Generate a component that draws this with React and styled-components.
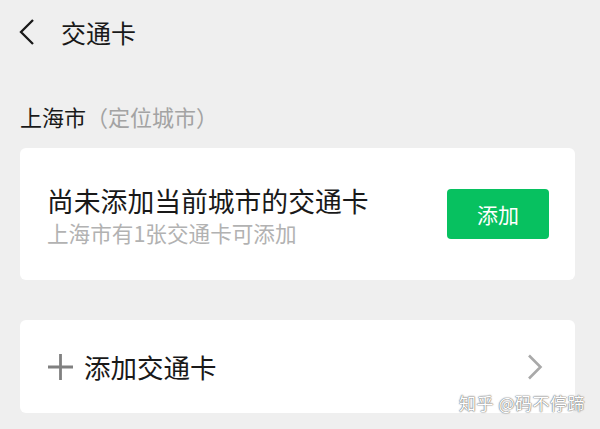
import styled, { createGlobalStyle } from 'styled-components';

const Global = createGlobalStyle`
  html, body {
    margin: 0;
    padding: 0;
    background: #efefef;
  }
  body {
    font-family: "Noto Sans CJK SC", "Noto Sans", sans-serif;
  }
`;

const Page = styled.div`
  position: relative;
  width: 600px;
  height: 429px;
  overflow: hidden;
  background: #efefef;
`;

const Header = styled.div`
  display: flex;
  align-items: center;
  height: 64px;
  padding-left: 19px;
  gap: 26px;
`;

const HeaderTitle = styled.div`
  font-size: 25px;
  color: #191919;
  line-height: 1;
`;

const SectionLabel = styled.div`
  margin: 37px 0 0 20px;
  font-size: 22px;
  line-height: 30px;
  color: #191919;

  span {
    color: #a3a3a3;
  }
`;

const Card = styled.div`
  box-sizing: border-box;
  margin: ${(p) => p.$top}px 25px 0 20px;
  height: ${(p) => p.$height}px;
  background: #fff;
  border-radius: 6px;
  display: flex;
  align-items: center;
  padding: 0 26px 0 27px;
`;

const TextBlock = styled.div`
  flex: 1;
  padding-top: 4px;
`;

const CardTitle = styled.div`
  font-size: 26.8px;
  line-height: 34px;
  color: #191919;
`;

const CardSub = styled.div`
  font-size: 21.6px;
  line-height: 30px;
  color: #b2b2b2;
`;

const AddButton = styled.button`
  width: 102px;
  height: 50px;
  border: 0;
  border-radius: 4px;
  background: #07c160;
  color: #fff;
  font-family: inherit;
  font-size: 21px;
  padding: 0;
`;

const RowLabel = styled.div`
  flex: 1;
  display: flex;
  align-items: center;
  gap: 10px;
  font-size: 26.5px;
  color: #191919;
`;

const Chevron = styled.svg`
  margin-right: 6px;
`;

const Watermark = styled.div`
  position: absolute;
  right: 15px;
  bottom: 14px;
  font-size: 17px;
  color: #fff;
  letter-spacing: 0.5px;
  text-shadow: 0 0 1px #777, 0 0 1px #777, 0 0 2px #999;
`;

const BackIcon = () => (
  <svg width="16" height="28" viewBox="0 0 16 28">
    <path d="M14 2 L2 14 L14 26" fill="none" stroke="#191919" strokeWidth="2.3" />
  </svg>
);

const PlusIcon = () => (
  <svg width="27" height="28" viewBox="0 0 27 28">
    <path d="M13.5 1 V27 M1 14 H26" stroke="#808080" strokeWidth="2.8" />
  </svg>
);

const ChevronIcon = () => (
  <Chevron width="16" height="26" viewBox="0 0 16 26">
    <path d="M2 1.5 L13.5 13 L2 24.5" fill="none" stroke="#a9a9a9" strokeWidth="2.6" />
  </Chevron>
);

export default function App() {
  return (
    <Page>
      <Global />
      <Header>
        <BackIcon />
        <HeaderTitle>交通卡</HeaderTitle>
      </Header>
      <SectionLabel>
        上海市<span>（定位城市）</span>
      </SectionLabel>
      <Card $top={17} $height={132}>
        <TextBlock>
          <CardTitle>尚未添加当前城市的交通卡</CardTitle>
          <CardSub>上海市有1张交通卡可添加</CardSub>
        </TextBlock>
        <AddButton>添加</AddButton>
      </Card>
      <Card $top={40} $height={93}>
        <RowLabel>
          <PlusIcon />
          添加交通卡
        </RowLabel>
        <ChevronIcon />
      </Card>
      <Watermark>知乎 @码不停蹄</Watermark>
    </Page>
  );
}
